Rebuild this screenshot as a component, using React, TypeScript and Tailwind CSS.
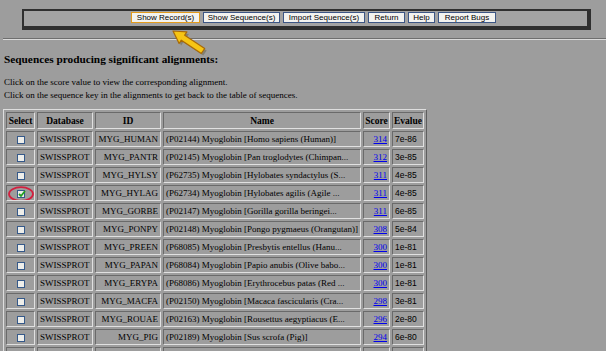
import React from "react";

const rows = [
  { id: "MYG_HUMAN", name: "(P02144) Myoglobin [Homo sapiens (Human)]", score: "314", ev: "7e-86" },
  { id: "MYG_PANTR", name: "(P02145) Myoglobin [Pan troglodytes (Chimpan...", score: "312", ev: "3e-85" },
  { id: "MYG_HYLSY", name: "(P62735) Myoglobin [Hylobates syndactylus (S...", score: "311", ev: "4e-85" },
  { id: "MYG_HYLAG", name: "(P62734) Myoglobin [Hylobates agilis (Agile ...", score: "311", ev: "4e-85", checked: true },
  { id: "MYG_GORBE", name: "(P02147) Myoglobin [Gorilla gorilla beringei...", score: "311", ev: "6e-85" },
  { id: "MYG_PONPY", name: "(P02148) Myoglobin [Pongo pygmaeus (Orangutan)]", score: "308", ev: "5e-84" },
  { id: "MYG_PREEN", name: "(P68085) Myoglobin [Presbytis entellus (Hanu...", score: "300", ev: "1e-81" },
  { id: "MYG_PAPAN", name: "(P68084) Myoglobin [Papio anubis (Olive babo...", score: "300", ev: "1e-81" },
  { id: "MYG_ERYPA", name: "(P68086) Myoglobin [Erythrocebus patas (Red ...", score: "300", ev: "1e-81" },
  { id: "MYG_MACFA", name: "(P02150) Myoglobin [Macaca fascicularis (Cra...", score: "298", ev: "3e-81" },
  { id: "MYG_ROUAE", name: "(P02163) Myoglobin [Rousettus aegyptiacus (E...", score: "296", ev: "2e-80" },
  { id: "MYG_PIG", name: "(P02189) Myoglobin [Sus scrofa (Pig)]", score: "294", ev: "6e-80" },
];

const cell =
  "h-[16px] p-0 border border-t-[#6a6a6a] border-l-[#6a6a6a] border-b-[#e0e0e0] border-r-[#e0e0e0] whitespace-nowrap overflow-hidden leading-[14px]";

function Checkbox({ checked }: { checked?: boolean }) {
  return (
    <span className="inline-block w-[8px] h-[8px] border border-[#35598a] bg-[#eeeeea] align-middle relative">
      {checked && (
        <svg className="absolute left-[0px] top-[-1px]" width="8" height="8" viewBox="0 0 8 8">
          <path d="M1 4 L3 6 L7 1" stroke="#21a121" strokeWidth="1.8" fill="none" />
        </svg>
      )}
    </span>
  );
}

const buttons = [
  { label: "Show Record(s)", w: "w-[69px]", focus: true },
  { label: "Show Sequence(s)", w: "w-[77px]" },
  { label: "Import Sequence(s)", w: "w-[82px]" },
  { label: "Return", w: "w-[37px]" },
  { label: "Help", w: "w-[27px]" },
  { label: "Report Bugs", w: "w-[58px]" },
];

export default function App() {
  return (
    <div className="relative w-[606px] h-[351px] overflow-hidden bg-[#9d9d9d] pt-[9px] font-['Liberation_Serif',serif] text-black">
      {/* toolbar */}
      <div className="ml-[22px] w-[569px] h-[21px] border-t-2 border-l-2 border-b-4 border-r-4 border-[#2f2f2f] bg-[#a3a3a3] flex items-start pl-[107px] pt-[1px] gap-[3px]">
        {buttons.map((b) => (
          <div
            key={b.label}
            className={`${b.w} h-[11px] flex items-center justify-center bg-[#f3f3f0] border ${
              b.focus ? "border-[#e29a1c]" : "border-[#3c5685]"
            } font-['Liberation_Sans',sans-serif] text-[8px] leading-[9px] text-black whitespace-nowrap`}
          >
            {b.label}
          </div>
        ))}
      </div>

      {/* hr */}
      <div className="ml-[3px] mt-[8px] h-[2px] border-t border-t-[#6e6e6e] border-b border-b-[#dadada]" />

      <div className="ml-[4px] mt-[12px] text-[11.3px] leading-[14px] font-bold">
        Sequences producing significant alignments:
      </div>

      <div className="ml-[4px] mt-[10px] text-[9px] leading-[13px]">
        <div>Click on the score value to view the corresponding alignment.</div>
        <div>Click on the sequence key in the alignments to get back to the table of sequences.</div>
      </div>

      <table className="ml-[3px] mt-[7px] table-fixed border-separate border-spacing-[2px] border border-t-[#dedede] border-l-[#dedede] border-b-[#5e5e5e] border-r-[#5e5e5e] w-[424px] text-[9px]">
        <thead>
          <tr className="font-bold text-[9.5px]">
            <th className={`${cell} h-[17px] w-[29px] text-center`}>Select</th>
            <th className={`${cell} h-[17px] w-[56px] text-center`}>Database</th>
            <th className={`${cell} h-[17px] w-[66px] text-center`}>ID</th>
            <th className={`${cell} h-[17px] w-[198px] text-center`}>Name</th>
            <th className={`${cell} h-[17px] w-[27px] text-center`}>Score</th>
            <th className={`${cell} h-[17px] w-[32px] text-center`}>Evalue</th>
          </tr>
        </thead>
        <tbody>
          {rows.map((r) => (
            <tr key={r.id}>
              <td className={`${cell} text-center relative`}>
                <Checkbox checked={r.checked} />
                {r.checked && (
                  <svg className="absolute left-[1px] top-[0px]" width="26" height="16" viewBox="0 0 26 16">
                    <ellipse cx="13" cy="8" rx="12" ry="6.8" fill="none" stroke="#d3203f" strokeWidth="1.8" />
                  </svg>
                )}
              </td>
              <td className={`${cell} text-left pl-[2px]`}>SWISSPROT</td>
              <td className={`${cell} text-right pr-[2px]`}>{r.id}</td>
              <td className={`${cell} text-left pl-[2px]`}>{r.name}</td>
              <td className={`${cell} text-right pr-[2px]`}>
                <a className="text-[#0000ee] underline">{r.score}</a>
              </td>
              <td className={`${cell} text-left pl-[2px] font-['Liberation_Sans',sans-serif] text-[8.5px]`}>{r.ev}</td>
            </tr>
          ))}
          <tr>
            <td className={cell}></td>
            <td className={cell}></td>
            <td className={cell}></td>
            <td className={cell}></td>
            <td className={cell}></td>
            <td className={cell}></td>
          </tr>
        </tbody>
      </table>

      {/* arrow */}
      <svg className="absolute left-[167px] top-[27px]" width="42" height="30" viewBox="0 0 42 30">
        <polygon
          points="8,6 21.9,6.9 19.7,10.2 39.7,23.5 36.3,28.5 16.3,15.2 14.1,18.5"
          fill="#6f6a55"
          opacity="0.6"
        />
        <polygon
          points="6,4 19.9,4.9 17.7,8.2 37.7,21.5 34.3,26.5 14.3,13.2 12.1,16.5"
          fill="#f6c514"
          stroke="#a86a08"
          strokeWidth="1.2"
          strokeLinejoin="round"
        />
      </svg>
    </div>
  );
}
